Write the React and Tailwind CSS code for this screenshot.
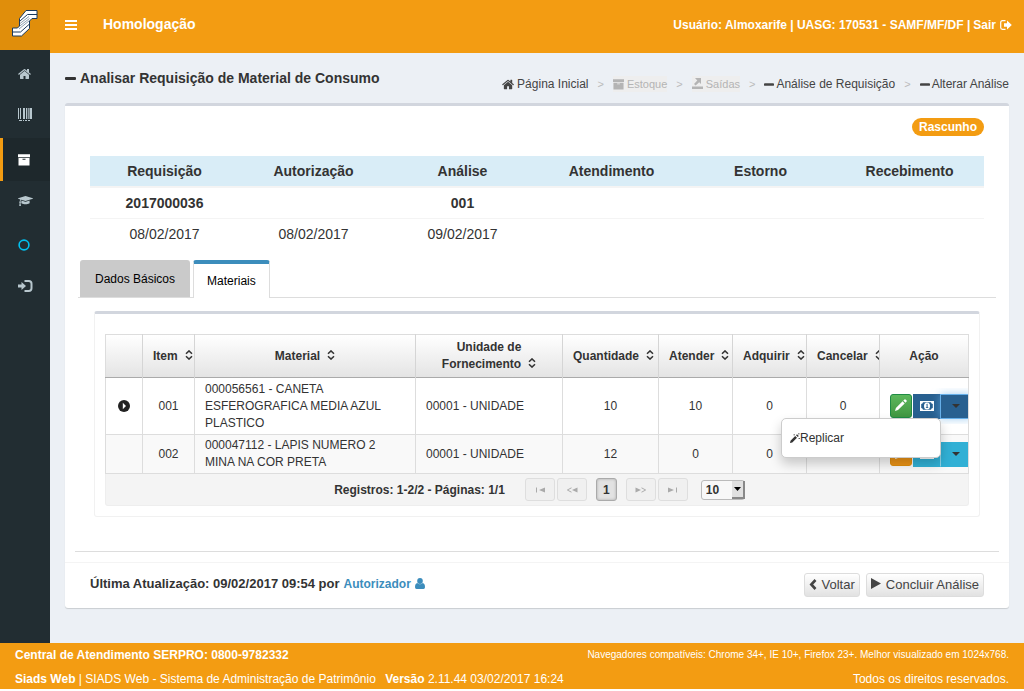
import React from "react";

const FaSvg = ({ d, w = 1792, className }) => (
  <svg viewBox={`0 0 ${w} 1792`} className={className} fill="currentColor" aria-hidden="true">
    <path d={d} />
  </svg>
);

const HOME =
  "M1408 992v480q0 26-19 45t-45 19h-384v-384h-256v384h-384q-26 0-45-19t-19-45v-480q0-1 .5-3t.5-3l575-474 575 474q1 2 1 6zm223-69l-62 74q-8 9-21 11h-3q-13 0-21-7l-692-577-692 577q-12 8-24 7-13-2-21-11l-62-74q-8-10-7-23.5t11-21.5l719-599q32-26 76-26t76 26l244 204v-195q0-14 9-23t23-9h192q14 0 23 9t9 23v408l219 182q10 8 11 21.5t-7 23.5z";
const CAP =
  "M1774 836l18 316q4 69-82 128t-235 93.5-323 34.5-323-34.5-235-93.5-82-128l18-316 574 181q22 7 48 7t48-7zm530-324q0 23-22 31l-1120 352q-4 1-10 1t-10-1l-652-206q-43 34-71 111.5t-34 178.5q63 36 63 109 0 69-58 107l58 433q2 14-8 25-9 11-24 11h-192q-15 0-24-11-10-11-8-25l58-433q-58-38-58-107 0-73 65-111 11-207 98-330l-333-104q-22-8-22-31t22-31l1120-352q4-1 10-1t10 1l1120 352q22 8 22 31z";

const Home = ({ className }) => <FaSvg d={HOME} className={className} />;

const Barcode = () => (
  <svg viewBox="0 0 14 13" className="h-[13px] w-[14px]" fill="currentColor" aria-hidden="true">
    <path d="M0 0h1v11H0zM2 0h1v11H2zM5 0h2v11H5zM8 0h1v11H8zM9.700 0h1v11h-1zM11.500 0h2.500v11h-2.500zM1 12h3v1H1zM5 12h1v1H5zM7 12h2v1H7zM10 12h2v1h-2z" />
  </svg>
);

const Archive = ({ className }) => (
  <svg viewBox="0 0 12 12" className={className} fill="currentColor" aria-hidden="true">
    <path fillRule="evenodd" d="M0 .3h12v3H0zM.5 4h11v7.500H.5zM4.500 4.800v1h3v-1z" />
  </svg>
);

const SignIn = () => (
  <svg viewBox="0 0 15 12" className="h-[12px] w-[15px]" aria-hidden="true">
    <path d="M0 4.500h3.500V2L8 6l-4.500 4V7.500H0z" fill="currentColor" />
    <path d="M6.500 1h4.300q2.700 0 2.700 2.700v4.600q0 2.700-2.700 2.700H6.500" fill="none" stroke="currentColor" strokeWidth="2" />
  </svg>
);

const SignOut = () => (
  <svg viewBox="0 0 12 10" className="h-[10px] w-[12px]" aria-hidden="true">
    <path d="M4 3.200h3V.5L11.800 5 7 9.500V6.800H4z" fill="currentColor" />
    <path d="M5.500 .7H2.500Q.7 .7 .7 2.500v5Q.7 9.300 2.500 9.300h3" fill="none" stroke="currentColor" strokeWidth="1.200" />
  </svg>
);

const Logo = () => (
  <svg viewBox="0 0 26 27" className="h-[27px] w-[26px]" aria-hidden="true">
    <path d="M14 .5h11v8h-5L17.500 11v7.500L9.500 26H.5v-8h5L7.500 16V8.500z" fill="#fff" stroke="#1b3a5c" strokeWidth="1" />
    <path d="M25 4.500H15.500L8 11M.5 22h8l9-8" fill="none" stroke="#1b3a5c" strokeWidth="1" />
    <path d="M8 13.500l9-7M8 15.800l9.500-7.300M7 19l10.500-8.500" fill="none" stroke="#8fa0b0" strokeWidth="1" />
  </svg>
);

const Minus = ({ className }) => (
  <svg viewBox="0 0 11 3" className={className} fill="currentColor" aria-hidden="true">
    <rect width="11" height="3" rx="1" />
  </svg>
);

const Saidas = () => (
  <svg viewBox="0 0 11 12" className="h-[12px] w-[11px]" fill="currentColor" aria-hidden="true">
    <path d="M0 8.500h11V11H0zM3 0h6v6L7.200 4.300 3.600 7.600 2 6l3.300-3.500z" />
  </svg>
);

const Sort = () => (
  <svg viewBox="0 0 8 10" className="ml-[7px] inline-block h-[10px] w-[8px] align-baseline" fill="none" stroke="#333" strokeWidth="1.500" aria-hidden="true">
    <path d="M1 3.800L4 .9l3 2.900M1 6.200l3 2.900 3-2.900" />
  </svg>
);

const Pencil = ({ className }) => (
  <svg viewBox="0 0 12 12" className={className} fill="currentColor" aria-hidden="true">
    <path d="M0 12l.9-3L7.600 2.300l2.100 2.100L3 11.100zM8.300 1.600L9.500.4q.5-.5 1 0l1.100 1.100q.5.500 0 1L10.400 3.700z" />
  </svg>
);

const PencilPlus = () => (
  <svg viewBox="0 0 10 10" className="h-[10px] w-[10px]" fill="#333" aria-hidden="true">
    <path d="M0 10l.5-2.300L5.200 3l1.800 1.800-4.700 4.700zM6 2.200l1-1 1.800 1.800-1 1zM3.500 1.500h1.500v.8H3.500zM8.500 0h.8v1.500h-.8zM8.500 5H10v.8H8.500z" />
  </svg>
);

const Money = () => (
  <svg viewBox="0 0 14 10" className="h-[10px] w-[14px]" aria-hidden="true">
    <path fillRule="evenodd" fill="#fff" d="M0 0h14v10H0zM3 1.200Q2.800 2.800 1.200 3v4q1.600.2 1.800 1.800h8q.2-1.600 1.800-1.800V3Q11.200 2.800 11 1.200z" />
    <ellipse cx="7" cy="5" rx="3" ry="3.500" fill="#fff" />
    <path d="M6.200 3.500L7 2.700h.6v3.600h.7v.8H5.900v-.8h.7V3.700z" fill="#286090" />
  </svg>
);

const Caret = () => (
  <svg viewBox="0 0 8 4" className="h-[4px] w-[8px]" fill="#333" aria-hidden="true">
    <path d="M0 0h8L4 4z" />
  </svg>
);

const menu = [
  { label: "Página Inicial", icon: <Home className="h-[14px] w-[14px]" />, cls: "mt-[4px] h-[40px] text-[#b8c7ce]" },
  { label: "Patrimônio", icon: <Barcode />, cls: "mb-[3px] h-[41px] text-[#b8c7ce]" },
  { label: "Estoque", icon: <Archive className="h-[12px] w-[12px]" />, cls: "h-[43px] border-l-[3px] border-[#f39c12] bg-[#1e282c] !pl-[15px] text-white" },
  { label: "Treinamento", icon: <FaSvg d={CAP} w={2304} className="h-[12px] w-[15px]" />, cls: "h-[40px] text-[#b8c7ce]" },
  { label: "Opções", icon: <svg viewBox="0 0 12 12" className="h-[12px] w-[12px]" aria-hidden="true"><circle cx="6" cy="6" r="4.900" fill="none" stroke="#00c0ef" strokeWidth="1.600" /></svg>, cls: "h-[48px]" },
  { label: "Sair", icon: <SignIn />, cls: "h-[34px] text-[#b8c7ce]" },
];

const info = [
  ["Requisição", "2017000036", "08/02/2017"],
  ["Autorização", "", "08/02/2017"],
  ["Análise", "001", "09/02/2017"],
  ["Atendimento", "", ""],
  ["Estorno", "", ""],
  ["Recebimento", "", ""],
];

const heads = ["Item", "Material", "Unidade de Fornecimento", "Quantidade", "Atender", "Adquirir", "Cancelar"];
const rows = [
  { cells: ["001", "000056561 - CANETA ESFEROGRAFICA MEDIA AZUL PLASTICO", "00001 - UNIDADE", "10", "10", "0", "0"], cls: "h-[57px] bg-white", open: true },
  { cells: ["002", "000047112 - LAPIS NUMERO 2 MINA NA COR PRETA", "00001 - UNIDADE", "12", "0", "0", "0"], cls: "h-[39px] bg-[#f9f9f9]", open: false },
];

const Sep = () => <li className="text-[11px] text-[#bbb]" aria-hidden="true">&gt;</li>;

function Actions({ open }) {
  return (
    <div className="flex h-[36px] items-center overflow-hidden pl-[10px]">
      <button type="button" aria-label="Editar" className={`mr-px flex h-[24px] w-[22px] shrink-0 items-center justify-center rounded-[3px] border pb-[3px] text-white ${open ? "border-[#1f8b45] bg-linear-to-b from-[#5cb85c] to-[#419641]" : "border-[#e08e0b] bg-[#eb9316]"}`}>
        <Pencil className="h-[12px] w-[12px]" />
      </button>
      <button type="button" aria-label="Valores" className={`flex h-[25px] w-[27px] shrink-0 items-center justify-center ${open ? "bg-[#286090]" : "bg-[#31b0d5]"}`}>
        <Money />
      </button>
      <button type="button" aria-label="Mais ações" aria-expanded={open} className={`flex h-[25px] w-[32px] shrink-0 items-center justify-center border ${open ? "border-[#66afe9] bg-[#286090] shadow-[0_0_8px_rgba(102,175,233,0.6)]" : "border-[#31b0d5] border-l-[#8fd0e4] bg-[#31b0d5]"}`}>
        <Caret />
      </button>
    </div>
  );
}

const pageBtn = "flex h-[23px] w-[30px] items-center justify-center rounded-[3px] border border-[#dedede] bg-[#f0f0f0] text-[#aaa]";

const PageIcon = ({ d, flip }) => (
  <svg viewBox="0 0 12 6" className={`h-[6px] w-[12px] ${flip ? "-scale-x-100" : ""}`} fill="currentColor" aria-hidden="true">
    <path d={d} />
  </svg>
);
const FIRST = "M2 .5h1v5H2zM11 .5v5L5 3z";
const PREV = "M11.500 .5v5L6 3zM5.500 .3v1L2.300 3l3.200 1.700v1L1 3.300v-.6z";

const formBtn = "flex h-[24px] items-center gap-[5px] rounded-[3px] border border-[#ddd] bg-linear-to-b from-white to-[#e2e2e2] px-[4px] text-[13px] text-[#444]";

export default function App() {
  return (
    <div className="bg-white font-['Liberation_Sans',Arial,sans-serif] text-[#333]">
      <div className="flex min-h-[643px] bg-[#ecf0f5]">
        <aside className="w-[50px] shrink-0 bg-[#222d32]">
          <a href="#inicio" aria-label="Siads" className="flex h-[50px] items-center justify-center bg-[#e08e0b] pb-[4px]">
            <Logo />
          </a>
          <nav className="flex flex-col">
            {menu.map((m) => (
              <a key={m.label} href="#menu" aria-label={m.label} className={`flex items-center pl-[18px] ${m.cls}`}>
                {m.icon}
              </a>
            ))}
          </nav>
        </aside>

        <main className="min-w-0 flex-1">
          <header className="flex h-[53px] items-center bg-[#f39c12] pr-[12px] pb-[4px] pl-[15px] font-bold text-white">
            <button type="button" aria-label="Alternar menu" className="flex flex-col gap-[2px]">
              <span className="h-[2px] w-[12px] bg-white" />
              <span className="h-[2px] w-[12px] bg-white" />
              <span className="h-[2px] w-[12px] bg-white" />
            </button>
            <span className="ml-[26px] text-[14px]">Homologação</span>
            <span className="ml-auto text-[12px]">Usuário: Almoxarife | UASG: 170531 - SAMF/MF/DF |</span>
            <a href="#sair" className="ml-[3px] flex items-center gap-[4px] text-[12px]">
              Sair <SignOut />
            </a>
          </header>

          <div className="flex h-[50px] items-center justify-between px-[15px]">
            <h1 className="flex items-center gap-[4px] text-[14px] font-bold">
              <Minus className="h-[3px] w-[11px]" />
              Analisar Requisição de Material de Consumo
            </h1>
            <ol className="mt-[12px] flex items-center gap-[9px] text-[12px] text-[#444]">
              <li><a href="#inicio" className="flex items-center gap-[2px]"><Home className="h-[13px] w-[13px]" />Página Inicial</a></li>
              <Sep />
              <li className="flex items-center gap-[3px] bg-[#eeeeee] text-[11px] text-[#b4b4b4]"><Archive className="h-[11px] w-[11px]" />Estoque</li>
              <Sep />
              <li className="flex items-center gap-[3px] bg-[#eeeeee] text-[11px] text-[#b4b4b4]"><Saidas />Saídas</li>
              <Sep />
              <li><a href="#analise" className="flex items-center gap-[2px]"><Minus className="h-[3px] w-[10px]" />Análise de Requisição</a></li>
              <Sep />
              <li><a href="#alterar" className="flex items-center gap-[2px]"><Minus className="h-[3px] w-[10px]" />Alterar Análise</a></li>
            </ol>
          </div>

          <section className="mx-[15px] mb-[35px] rounded-[3px] border-t-[3px] border-[#d2d6de] bg-white shadow-[0_1px_1px_rgba(0,0,0,0.15)]">
            <div className="flex justify-end px-[25px] pt-[12px]">
              <span className="flex h-[18px] items-center rounded-full bg-[#f39c12] px-[7px] text-[12px] font-bold text-white">Rascunho</span>
            </div>

            <div className="px-[25px] pt-[20px]">
              <table className="w-full table-fixed text-center text-[14px] leading-[20px]">
                <thead>
                  <tr className="h-[31px] border-b-2 border-[#f4f4f4] bg-[#d9edf7]">
                    {info.map((c) => <th key={c[0]} scope="col">{c[0]}</th>)}
                  </tr>
                </thead>
                <tbody>
                  <tr className="h-[31px] border-b border-[#f4f4f4] font-bold">
                    {info.map((c) => <td key={c[0]}>{c[1]}</td>)}
                  </tr>
                  <tr className="h-[31px]">
                    {info.map((c) => <td key={c[0]}>{c[2]}</td>)}
                  </tr>
                </tbody>
              </table>
            </div>

            <div role="tablist" className="mr-[13px] ml-[13px] mt-[11px] flex h-[38px] items-start gap-[3px] border-b border-[#ddd] pl-[2px] text-[12px] text-black">
              <button type="button" role="tab" aria-selected="false" className="h-[37px] rounded-t-[3px] bg-[#cacaca] px-[15px]">Dados Básicos</button>
              <button type="button" role="tab" aria-selected="true" className="h-[38px] rounded-t-[3px] border-x border-t-4 border-[#ddd] border-t-[#3c8dbc] bg-white px-[13px]">Materiais</button>
            </div>

            <div className="mx-[29px] mt-[13px] rounded-[3px] border border-t-[3px] border-[#f1f1f1] border-t-[#d2d6de] px-[10px] pt-[20px] pb-[10px]">
              <table className="w-full table-fixed border-collapse border border-[#ddd] text-center text-[12px] leading-[17px]">
                <colgroup>
                  <col className="w-[37px]" />
                  <col className="w-[52px]" />
                  <col />
                  <col className="w-[147px]" />
                  <col className="w-[96px]" />
                  <col className="w-[74px]" />
                  <col className="w-[74px]" />
                  <col className="w-[73px]" />
                  <col className="w-[89px]" />
                </colgroup>
                <thead>
                  <tr className="h-[43px] border-b border-[#aaa] bg-linear-to-b from-white to-[#e4e4e4]">
                    <th aria-label="Detalhes" className="border-r border-[#d5d5d5]" />
                    {heads.map((h) => (
                      <th key={h} scope="col" className="overflow-hidden border-r border-[#d5d5d5] px-[10px] text-[12px]">
                        {h === "Unidade de Fornecimento" ? (
                          <span className="whitespace-nowrap">Unidade de<br />Fornecimento<Sort /></span>
                        ) : (
                          <span className="whitespace-nowrap">{h}<Sort /></span>
                        )}
                      </th>
                    ))}
                    <th scope="col">Ação</th>
                  </tr>
                </thead>
                <tbody>
                  {rows.map((r) => (
                    <tr key={r.cells[0]} className={`border-b border-[#ddd] ${r.cls}`}>
                      <td className="border-r border-[#ddd]">
                        {r.open && (
                          <button type="button" aria-label="Expandir" className="flex w-full justify-center">
                            <svg viewBox="0 0 12 12" className="h-[12px] w-[12px]" aria-hidden="true">
                              <circle cx="6" cy="6" r="6" fill="#222" />
                              <path d="M4.800 2.800L8 6l-3.200 3.200z" fill="#fff" />
                            </svg>
                          </button>
                        )}
                      </td>
                      {r.cells.map((c, i) => (
                        <td key={i} className={`border-r border-[#ddd] px-[10px] ${i === 1 || i === 2 ? "text-left" : ""}`}>{c}</td>
                      ))}
                      <td className="relative">
                        <Actions open={r.open} />
                        {r.open && (
                          <div role="menu" className="absolute top-[40px] right-[27px] z-10 flex h-[40px] w-[160px] items-center rounded-[5px] border border-[#ccc] bg-white pl-[8px] shadow-[0_6px_12px_rgba(0,0,0,0.2)]">
                            <button type="button" role="menuitem" className="flex items-center text-[12px]">
                              <PencilPlus />Replicar
                            </button>
                          </div>
                        )}
                      </td>
                    </tr>
                  ))}
                </tbody>
              </table>
              <div className="flex h-[32px] items-center justify-center rounded-b-[3px] border border-t-0 border-[#eee] bg-[#f4f4f4] pl-[5px] text-[12px] font-bold">
                <span className="mr-[20px]">Registros: 1-2/2 - Páginas: 1/1</span>
                <button type="button" aria-label="Primeira página" className={pageBtn}><PageIcon d={FIRST} /></button>
                <button type="button" aria-label="Página anterior" className={`ml-[2px] ${pageBtn}`}><PageIcon d={PREV} /></button>
                <button type="button" className="mx-[9px] h-[23px] w-[21px] rounded-[3px] border border-[#aaa] bg-[#e2e2e2] shadow-[inset_0_0_3px_rgba(0,0,0,0.25)]">1</button>
                <button type="button" aria-label="Próxima página" className={pageBtn}><PageIcon d={PREV} flip /></button>
                <button type="button" aria-label="Última página" className={`ml-[2px] ${pageBtn}`}><PageIcon d={FIRST} flip /></button>
                <div className="relative ml-[13px] h-[20px] w-[44px]">
                  <select aria-label="Registros por página" defaultValue="10" className="h-full w-full appearance-none rounded-[3px] border border-[#bbb] bg-[#f8f8f8] pl-[4px] text-[12px] font-bold">
                    <option>10</option>
                    <option>20</option>
                  </select>
                  <span className="pointer-events-none absolute top-px right-0 flex h-[18px] w-[13px] items-center justify-center border-r-2 border-b-2 border-[#888] bg-[#e0e0e0]">
                    <svg viewBox="0 0 7 4" className="h-[4px] w-[7px]" aria-hidden="true"><path d="M0 0h7L3.500 4z" fill="#000" /></svg>
                  </span>
                </div>
              </div>
            </div>

            <hr className="mx-[10px] mt-[34px] border-[#ddd]" />
            <div className="mt-[10px] flex h-[46px] items-center border-t border-[#f4f4f4] px-[25px] pb-[2px]">
              <p className="flex items-center pb-[2px] text-[13px] font-bold">
                Última Atualização: 09/02/2017 09:54 por
                <a href="#autorizador" className="ml-[4px] flex items-center gap-[4px] text-[12px] text-[#3c8dbc]">
                  Autorizador
                  <svg viewBox="0 0 10 11" className="h-[11px] w-[10px]" fill="currentColor" aria-hidden="true">
                    <ellipse cx="5" cy="3" rx="2.800" ry="3" />
                    <path d="M2.300 5Q5 7.500 7.700 5 10 5.400 10 9.300 10 11 8.500 11h-7Q0 11 0 9.300 0 5.400 2.300 5z" />
                  </svg>
                </a>
              </p>
              <button type="button" className={`ml-auto ${formBtn}`}>
                <svg viewBox="0 0 8 11" className="h-[11px] w-[8px]" fill="none" stroke="currentColor" strokeWidth="2.600" aria-hidden="true"><path d="M6.500 1L2.300 5.500l4.200 4.500" /></svg>
                Voltar
              </button>
              <button type="button" className={`ml-[6px] ${formBtn}`}>
                <svg viewBox="0 0 10 11" className="mb-[3px] h-[11px] w-[10px]" fill="currentColor" aria-hidden="true"><path d="M0 0l10 5.500L0 11z" /></svg>
                Concluir Análise
              </button>
            </div>
          </section>
        </main>
      </div>

      <footer className="flex h-[46px] flex-col justify-between bg-[#f39c12] px-[15px] pt-[4px] pb-[2px] text-[12px] leading-[16px] text-white">
        <div className="flex justify-between">
          <strong>Central de Atendimento SERPRO: 0800-9782332</strong>
          <span className="text-[10px]">Navegadores compatíveis: Chrome 34+, IE 10+, Firefox 23+. Melhor visualizado em 1024x768.</span>
        </div>
        <div className="flex justify-between">
          <p><strong>Siads Web</strong> | SIADS Web - Sistema de Administração de Patrimônio <strong className="ml-[6px]">Versão</strong> 2.11.44 03/02/2017 16:24</p>
          <span>Todos os direitos reservados.</span>
        </div>
      </footer>
    </div>
  );
}
